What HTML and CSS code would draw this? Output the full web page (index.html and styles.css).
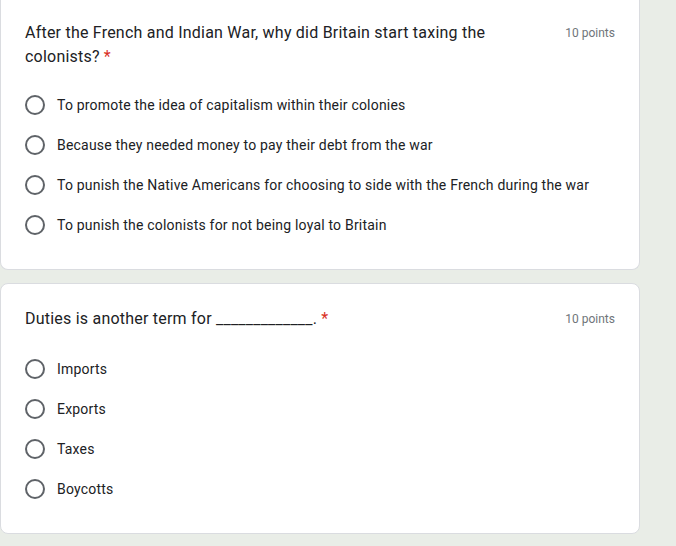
FILE: index.html
```html
<!DOCTYPE html>
<html>
<head>
<meta charset="utf-8">
<link rel="stylesheet" href="styles.css">
</head>
<body>
<div class="page">
  <div class="card card-clipped">
    <div class="head">
      <div class="title">After the French and Indian War, why did Britain start taxing the colonists?<span class="req">*</span></div>
      <div class="points">10 points</div>
    </div>
    <div class="options">
      <div class="opt"><span class="radio"></span><span class="label">To promote the idea of capitalism within their colonies</span></div>
      <div class="opt"><span class="radio"></span><span class="label">Because they needed money to pay their debt from the war</span></div>
      <div class="opt"><span class="radio"></span><span class="label">To punish the Native Americans for choosing to side with the French during the war</span></div>
      <div class="opt"><span class="radio"></span><span class="label">To punish the colonists for not being loyal to Britain</span></div>
    </div>
  </div>
  <div class="card card-2">
    <div class="head">
      <div class="title">Duties is another term for _____________.<span class="req">*</span></div>
      <div class="points">10 points</div>
    </div>
    <div class="options options-2">
      <div class="opt"><span class="radio"></span><span class="label">Imports</span></div>
      <div class="opt"><span class="radio"></span><span class="label">Exports</span></div>
      <div class="opt"><span class="radio"></span><span class="label">Taxes</span></div>
      <div class="opt"><span class="radio"></span><span class="label">Boycotts</span></div>
    </div>
  </div>
</div>
</body>
</html>
```
FILE: styles.css
```css
html, body {
  margin: 0;
  padding: 0;
  background: #e9ede7;
  font-family: Roboto, "Liberation Sans", Arial, sans-serif;
  color: #202124;
}
.page {
  width: 640px;
  display: flex;
  flex-direction: column;
  gap: 13px;
}
.card {
  background: #fff;
  border: 1px solid #dadce0;
  border-radius: 8px;
  padding: 24px 24px 24px 24px;
}
.card-clipped {
  border-top: 0;
  border-top-left-radius: 0;
  border-top-right-radius: 0;
  padding-top: 21px;
}
.card-2 {
  padding-top: 23px;
}
.head {
  display: flex;
  align-items: flex-start;
  gap: 24px;
}
.title {
  flex: 1;
  font-size: 16px;
  line-height: 24px;
  letter-spacing: 0.22px;
}
.req {
  color: #d93025;
  margin-left: 4px;
}
.points {
  font-size: 12px;
  line-height: 24px;
  color: #70757a;
  white-space: nowrap;
}
.options {
  margin-top: 16px;
  display: flex;
  flex-direction: column;
}
.options-2 {
  margin-top: 18px;
}
.opt {
  height: 40px;
  display: flex;
  align-items: center;
  gap: 12px;
}
.radio {
  width: 16px;
  height: 16px;
  border: 2px solid #5f6368;
  border-radius: 50%;
  flex: none;
}
.label {
  font-size: 14px;
  line-height: 20px;
  letter-spacing: 0.2px;
}
```
